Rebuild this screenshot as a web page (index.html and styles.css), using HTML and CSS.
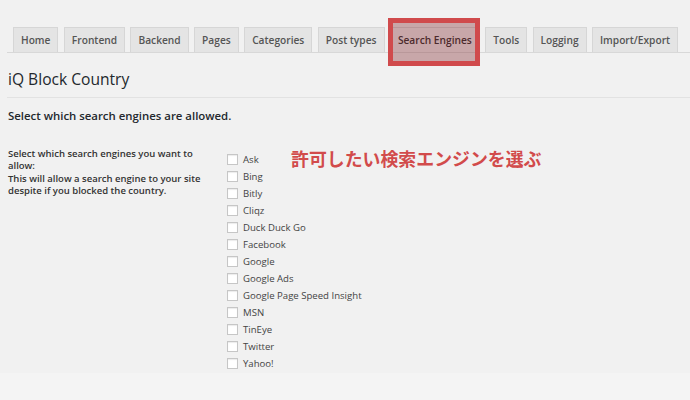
FILE: index.html
```html
<!DOCTYPE html>
<html lang="en">
<head>
<meta charset="utf-8">
<title>iQ Block Country</title>
<link rel="stylesheet" href="styles.css">
</head>
<body>
<div class="page">
  <nav class="tabs">
    <span class="tab">Home</span>
    <span class="tab">Frontend</span>
    <span class="tab">Backend</span>
    <span class="tab">Pages</span>
    <span class="tab">Categories</span>
    <span class="tab">Post types</span>
    <span class="tab tab-active">Search Engines<span class="mark"></span></span>
    <span class="tab">Tools</span>
    <span class="tab">Logging</span>
    <span class="tab">Import/Export</span>
  </nav>
  <h1 class="title">iQ Block Country</h1>
  <section class="panel">
    <h3 class="section-title">Select which search engines are allowed.</h3>
    <div class="row">
      <div class="desc">Select which search engines you want to allow:<br>This will allow a search engine to your site despite if you blocked the country.</div>
      <ul class="engines">
        <li><span class="box"></span>Ask</li>
        <li><span class="box"></span>Bing</li>
        <li><span class="box"></span>Bitly</li>
        <li><span class="box"></span>Cliqz</li>
        <li><span class="box"></span>Duck Duck Go</li>
        <li><span class="box"></span>Facebook</li>
        <li><span class="box"></span>Google</li>
        <li><span class="box"></span>Google Ads</li>
        <li><span class="box"></span>Google Page Speed Insight</li>
        <li><span class="box"></span>MSN</li>
        <li><span class="box"></span>TinEye</li>
        <li><span class="box"></span>Twitter</li>
        <li><span class="box"></span>Yahoo!</li>
      </ul>
      <div class="note">許可したい検索エンジンを選ぶ</div>
    </div>
  </section>
</div>
</body>
</html>
```

FILE: styles.css
```css
html { background: #f4f4f4; }
body {
  margin: 0;
  font-family: "Open Sans", "Noto Sans CJK JP", sans-serif;
  color: #23282d;
}
.page {
  background: #f1f1f1;
  height: 373px;
  overflow: hidden;
}
.tabs {
  display: flex;
  gap: 5.4px;
  margin: 0 0 0 7px;
  padding: 27px 0 0 6px;
  border-bottom: 1px solid #d8d8d8;
  height: 25px;
  align-items: flex-end;
}
.tab {
  position: relative;
  box-sizing: border-box;
  height: 25px;
  line-height: 24px;
  padding: 0 7px;
  border: 1px solid #d6d6d6;
  border-bottom: none;
  background: #e4e4e4;
  font-size: 10.2px;
  font-weight: 600;
  color: #555;
  white-space: nowrap;
}
.tab-active {
  background: #f1f1f1;
  color: #222;
}
.mark {
  position: absolute;
  left: -3px;
  right: -1px;
  top: -10px;
  bottom: -14px;
  border: 5px solid #d04a4c;
  background: rgba(141, 58, 63, 0.4);
}
.title {
  margin: 0 0 0 7px;
  padding: 14px 0 0 1px;
  height: 30px;
  font-size: 15.6px;
  font-weight: 400;
  line-height: 24px;
  border-bottom: 1px solid #e2e2e2;
  color: #23282d;
}
.panel {
  padding: 0 0 0 8px;
}
.section-title {
  margin: 0;
  padding-top: 8px;
  font-size: 11.4px;
  font-weight: 600;
  line-height: 20px;
  color: #23282d;
}
.row {
  display: flex;
  align-items: flex-start;
  margin-top: 22px;
}
.desc {
  width: 200px;
  flex-shrink: 0;
  font-size: 9.5px;
  font-weight: 600;
  line-height: 12.3px;
  color: #333;
}
.engines {
  list-style: none;
  margin: 0 0 0 19px;
  padding: 3px 0 0 0;
  width: 64px;
  flex-shrink: 0;
}
.engines li {
  display: flex;
  align-items: center;
  height: 17px;
  font-size: 9.6px;
  color: #444;
  white-space: nowrap;
}
.box {
  box-sizing: border-box;
  flex-shrink: 0;
  width: 11px;
  height: 11px;
  margin-right: 5px;
  border: 1px solid #c6c6c6;
  background: #fff;
  box-shadow: inset 0 1px 1px rgba(0,0,0,0.08);
}
.note {
  font-family: "Noto Sans CJK JP", sans-serif;
  font-size: 17.9px;
  font-weight: 700;
  color: #d24b4b;
  line-height: 20px;
}
```
